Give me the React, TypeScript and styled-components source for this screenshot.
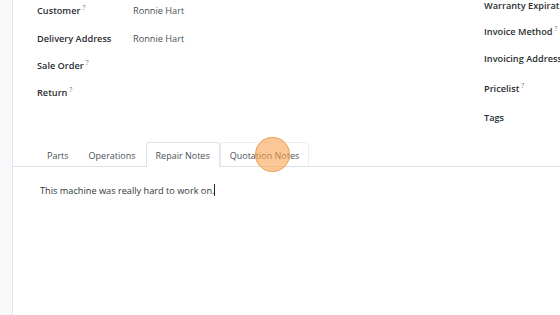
import styled, { createGlobalStyle } from "styled-components";

const GlobalStyle = createGlobalStyle`
  *, *::before, *::after {
    box-sizing: border-box;
  }
  html, body {
    margin: 0;
    padding: 0;
    background: #ffffff;
    font-family: "Open Sans", "Noto Sans", sans-serif;
    overflow: hidden;
  }
`;

const Page = styled.div`
  display: flex;
  width: 560px;
  height: 315px;
  overflow: hidden;
`;

const SideStrip = styled.div`
  width: 13px;
  flex-shrink: 0;
  background: #f7f8fa;
  border-right: 1px solid #e2e4e8;
`;

const Sheet = styled.div`
  flex: 1;
  display: flex;
  flex-direction: column;
  min-width: 0;
`;

const FieldsArea = styled.div`
  display: flex;
  height: 151px;
  margin-top: -8px;
`;

const LeftGroup = styled.div`
  width: 471px;
  padding-left: 24px;
  display: flex;
  flex-direction: column;
`;

const RightGroup = styled.div`
  flex: 1;
  display: flex;
  flex-direction: column;
  white-space: nowrap;
  overflow: hidden;
`;

const Row = styled.div<{ $h: number }>`
  display: flex;
  align-items: center;
  height: ${(p) => p.$h}px;
`;

const Label = styled.div`
  width: 96px;
  flex-shrink: 0;
  font-size: 9.2px;
  font-weight: 600;
  color: #2b2f33;
  white-space: nowrap;
`;

const Help = styled.sup`
  font-size: 6.5px;
  font-weight: 400;
  color: #6c757d;
  margin-left: 2px;
`;

const Value = styled.div`
  font-size: 9.2px;
  color: #4b5157;
`;

const TabBar = styled.div`
  display: flex;
  align-items: flex-end;
  height: 24px;
  padding-left: 24px;
  border-bottom: 1px solid #dee2e6;
`;

const Tab = styled.div<{ $active?: boolean; $hover?: boolean }>`
  display: flex;
  align-items: center;
  padding: 1px 9px 0;
  font-size: 9px;
  color: #4b5157;
  white-space: nowrap;
  border: 1px solid
    ${(p) => (p.$active ? "#dee2e6" : p.$hover ? "#eceef1" : "transparent")};
  border-bottom: none;
  border-radius: 3px 3px 0 0;
  background: #ffffff;
  margin-bottom: ${(p) => (p.$active ? "-1px" : "0")};
  height: ${(p) => (p.$active ? "25px" : "24px")};
`;

const Notes = styled.div`
  padding: 17px 0 0 27px;
  font-size: 9.2px;
  color: #32373c;
`;

const Caret = styled.span`
  display: inline-block;
  width: 1px;
  height: 12px;
  background: #222;
  vertical-align: -2px;
`;

const Canvas = styled.div`
  position: relative;
`;

const ClickMarker = styled.div`
  position: absolute;
  left: 255px;
  top: 137px;
  width: 35px;
  height: 35px;
  border-radius: 50%;
  background: rgba(250, 163, 82, 0.6);
  border: 1px solid rgba(240, 150, 70, 0.8);
`;

const leftRows = [
  { label: "Customer", help: true, value: "Ronnie Hart", h: 29 },
  { label: "Delivery Address", help: false, value: "Ronnie Hart", h: 26 },
  { label: "Sale Order", help: true, value: "", h: 28 },
  { label: "Return", help: true, value: "", h: 27 },
];

const rightRows = [
  { label: "Warranty Expiration", help: false, h: 26 },
  { label: "Invoice Method", help: true, h: 27 },
  { label: "Invoicing Address", help: false, h: 27 },
  { label: "Pricelist", help: true, h: 32 },
  { label: "Tags", help: false, h: 26 },
];

const App = () => {
  return (
    <>
      <GlobalStyle />
      <Canvas>
        <Page>
          <SideStrip />
          <Sheet>
            <FieldsArea>
              <LeftGroup>
                <Row $h={4} />
                {leftRows.map((r) => (
                  <Row key={r.label} $h={r.h}>
                    <Label>
                      {r.label}
                      {r.help && <Help>?</Help>}
                    </Label>
                    <Value>{r.value}</Value>
                  </Row>
                ))}
              </LeftGroup>
              <RightGroup>
                {rightRows.map((r) => (
                  <Row key={r.label} $h={r.h}>
                    <Label>
                      {r.label}
                      {r.help && <Help>?</Help>}
                    </Label>
                  </Row>
                ))}
              </RightGroup>
            </FieldsArea>
            <TabBar>
              <Tab>Parts</Tab>
              <Tab>Operations</Tab>
              <Tab $active>Repair Notes</Tab>
              <Tab $hover>Quotation Notes</Tab>
            </TabBar>
            <Notes>
              This machine was really hard to work on.
              <Caret />
            </Notes>
          </Sheet>
        </Page>
        <ClickMarker />
      </Canvas>
    </>
  );
};

export default App;
